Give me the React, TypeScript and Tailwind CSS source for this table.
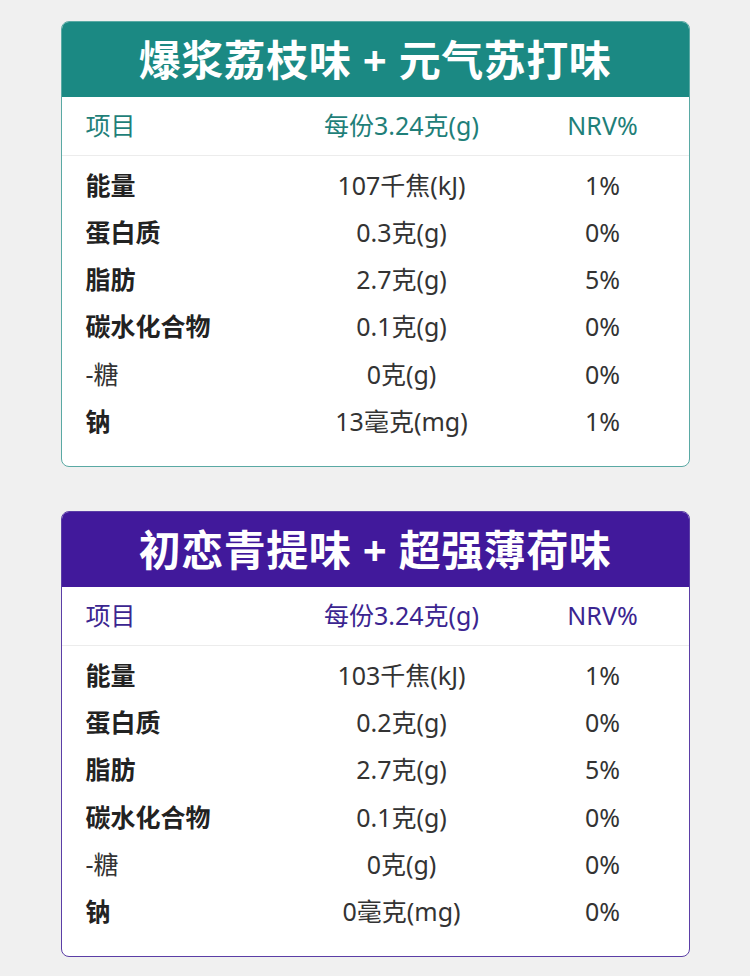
const font = { fontFamily: '"Noto Sans", "Noto Sans CJK SC", sans-serif' }

type Row = [string, string, string]

interface Card {
  title: string
  theme: "teal" | "purple"
  rows: Row[]
}

const cards: Card[] = [
  {
    title: "爆浆荔枝味 + 元气苏打味",
    theme: "teal",
    rows: [
      ["能量", "107千焦(kJ)", "1%"],
      ["蛋白质", "0.3克(g)", "0%"],
      ["脂肪", "2.7克(g)", "5%"],
      ["碳水化合物", "0.1克(g)", "0%"],
      ["-糖", "0克(g)", "0%"],
      ["钠", "13毫克(mg)", "1%"],
    ],
  },
  {
    title: "初恋青提味 + 超强薄荷味",
    theme: "purple",
    rows: [
      ["能量", "103千焦(kJ)", "1%"],
      ["蛋白质", "0.2克(g)", "0%"],
      ["脂肪", "2.7克(g)", "5%"],
      ["碳水化合物", "0.1克(g)", "0%"],
      ["-糖", "0克(g)", "0%"],
      ["钠", "0毫克(mg)", "0%"],
    ],
  },
]

function NutritionCard({ card }: { card: Card }) {
  const teal = card.theme === "teal"
  return (
    <div
      className={
        "w-[629px] mx-auto rounded-[8px] overflow-hidden bg-white border " +
        (teal ? "border-[#5aa9a4]" : "border-[#5b3ea6]")
      }
    >
      {/* title bar */}
      <div
        className={
          "h-[75px] flex items-center justify-center text-white font-bold text-[42px] tracking-[0.5px] " +
          (teal ? "bg-[#1b8983]" : "bg-[#41199b]")
        }
      >
        {card.title}
      </div>

      {/* column headings */}
      <div
        className={
          "h-[59px] grid grid-cols-[197px_238px_164px] items-center pl-[24px] text-[25px] border-b border-[#ececec] " +
          (teal ? "text-[#1f7f79]" : "text-[#3b2590]")
        }
      >
        <div>项目</div>
        <div className="text-center">每份3.24克(g)</div>
        <div className="text-center">NRV%</div>
      </div>

      <div className="pt-[6px] pb-[21px]">
        {card.rows.map(([name, amount, nrv]) => (
          <div
            key={name}
            className="h-[47.2px] grid grid-cols-[197px_238px_164px] items-center pl-[24px] text-[25px] text-[#333]"
          >
            <div className={name === "-糖" ? "text-[#333]" : "font-bold text-[#222]"}>{name}</div>
            <div className="text-center">{amount}</div>
            <div className="text-center">{nrv}</div>
          </div>
        ))}
      </div>
    </div>
  )
}

export default function App() {
  return (
    <div className="w-[750px] h-[976px] bg-[#f0f0f0] pt-[21px] flex flex-col gap-[44px]" style={font}>
      {cards.map((c) => (
        <NutritionCard key={c.title} card={c} />
      ))}
    </div>
  )
}
